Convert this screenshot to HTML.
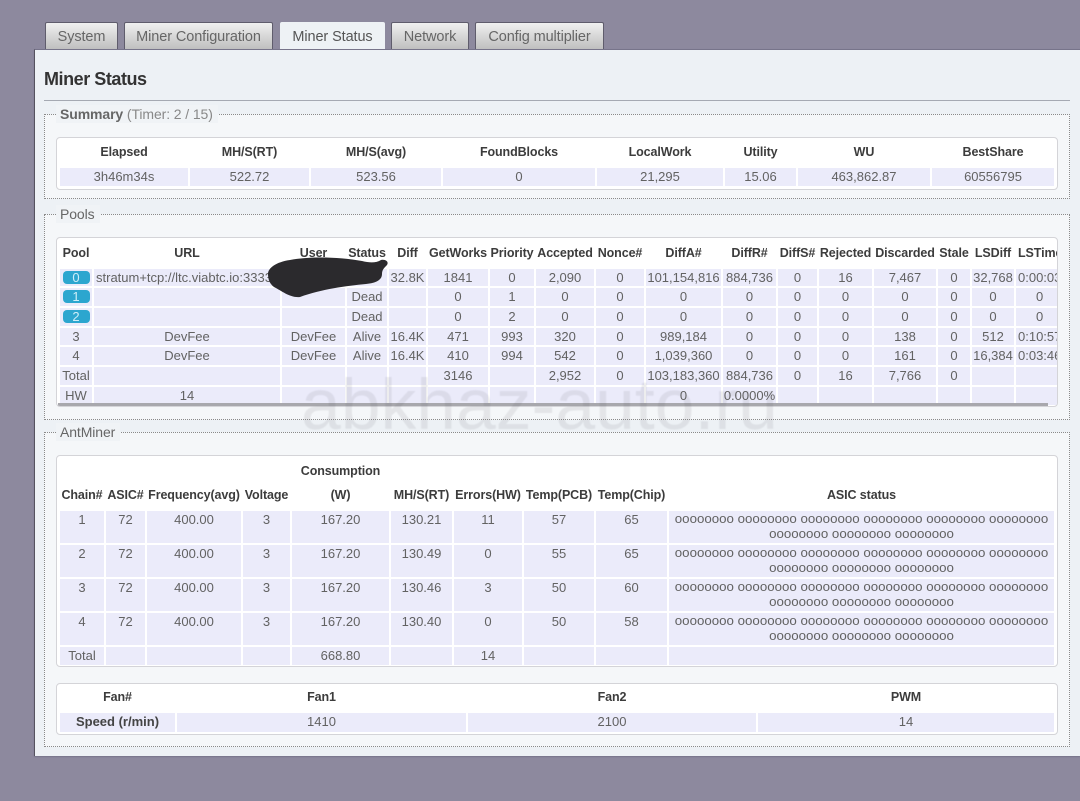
<!DOCTYPE html>
<html><head><meta charset="utf-8"><title>Miner Status</title>
<style>
html,body{margin:0;padding:0;width:1080px;height:801px;overflow:hidden;background:#8d899e;font-family:"Liberation Sans",sans-serif;color:#555}
.a{position:absolute}
.tab{position:absolute;top:22px;height:27px;box-sizing:border-box;border:1px solid #5f5c6c;border-bottom:0;border-radius:2px 2px 0 0;background:linear-gradient(#f0f0f0,#bfbfbf);text-align:center;font-size:14.5px;line-height:28px;color:#666;letter-spacing:-.1px}
.tab.on{background:#eef2f5;border-color:#eef2f5;height:28px;color:#555}
#panel{position:absolute;left:34px;top:49px;width:1046px;height:707px;background:#edf1f5;border-left:1px solid #55525f;border-top:1px solid #77748a;box-sizing:border-box;box-shadow:0 1px 1px #77748a}
.fs{position:absolute;left:44px;width:1026px;box-sizing:border-box;border:1px dotted #8a8a8a;background:#f5f7f9}
.lg{position:absolute;background:#f0f3f6;padding:0 5px 0 4px;left:56px;font-size:14px;line-height:18px;color:#666;font-weight:bold;letter-spacing:-.1px}
.lg span{font-weight:normal;color:#888}
.box{position:absolute;left:56px;width:1002px;box-sizing:border-box;background:#fff;border:1px solid #d4d4d8;border-radius:4px;overflow:hidden}
table{position:absolute;left:1px;top:0;table-layout:fixed;border-collapse:separate;border-spacing:2px 2px;font-size:13px}
td,th{padding:0;text-align:center;overflow:hidden;white-space:nowrap}
th{color:#3c3c3c;font-weight:bold;font-size:12.5px;letter-spacing:-.1px}
td{background:#ebebfa;color:#626262;vertical-align:top;line-height:17px}
.b{display:inline-block;width:27px;height:13px;line-height:13px;background:#2ca6cf;color:#cfeef8;border-radius:4px;margin-top:2px}
.st{font-size:13.3px;line-height:15px;white-space:normal;padding-top:0;letter-spacing:0}
.h{vertical-align:bottom;line-height:24px;padding-bottom:2px}
.t th{padding-bottom:4px}
</style></head><body>
<div class="tab" style="left:45px;width:73px">System</div>
<div class="tab" style="left:124px;width:149px">Miner Configuration</div>
<div class="tab on" style="left:280px;width:105px">Miner Status</div>
<div class="tab" style="left:391px;width:78px">Network</div>
<div class="tab" style="left:475px;width:129px">Config multiplier</div>
<div id="panel"></div>
<div class="a" style="left:44px;top:68px;font-size:18px;line-height:22px;color:#333;font-weight:bold;letter-spacing:-.45px">Miner Status</div>
<div class="a" style="left:44px;top:100px;width:1026px;height:1px;background:#a5a9b2"></div>

<div class="fs" style="top:114px;height:85px"></div>
<div class="lg" style="top:105px">Summary <span>(Timer: 2 / 15)</span></div>
<div class="box" style="top:137px;height:53px">
<table class="t" style="top:1px;left:1px;width:998px"><colgroup><col style="width:128px"><col style="width:119px"><col style="width:130px"><col style="width:152px"><col style="width:126px"><col style="width:71px"><col style="width:132px"><col style="width:122px"></colgroup>
<tr style="height:25px"><th>Elapsed</th><th>MH/S(RT)</th><th>MH/S(avg)</th><th>FoundBlocks</th><th>LocalWork</th><th>Utility</th><th>WU</th><th>BestShare</th></tr>
<tr style="height:18px"><td>3h46m34s</td><td>522.72</td><td>523.56</td><td>0</td><td>21,295</td><td>15.06</td><td>463,862.87</td><td>60556795</td></tr></table></div>

<div class="fs" style="top:214px;height:206px"></div>
<div class="lg" style="top:205px;font-weight:normal;color:#666">Pools</div>
<div class="box" style="top:237px;height:170px">
<table style="top:-1px;left:1px;width:1020px"><colgroup><col style="width:32px"><col style="width:186px"><col style="width:63px"><col style="width:40px"><col style="width:37px"><col style="width:60px"><col style="width:44px"><col style="width:58px"><col style="width:48px"><col style="width:75px"><col style="width:53px"><col style="width:39px"><col style="width:53px"><col style="width:62px"><col style="width:32px"><col style="width:42px"><col style="width:60px"></colgroup>
<tr style="height:28px"><th>Pool</th><th>URL</th><th>User</th><th>Status</th><th>Diff</th><th>GetWorks</th><th>Priority</th><th>Accepted</th><th>Nonce#</th><th>DiffA#</th><th>DiffR#</th><th>DiffS#</th><th>Rejected</th><th>Discarded</th><th>Stale</th><th>LSDiff</th><th style="text-align:left;padding-left:2px">LSTime</th></tr>
<tr style="height:17px"><td><span class="b">0</span></td><td style="text-align:left;padding-left:2px">stratum+tcp://ltc.viabtc.io:3333</td><td></td><td></td><td>32.8K</td><td>1841</td><td>0</td><td>2,090</td><td>0</td><td>101,154,816</td><td>884,736</td><td>0</td><td>16</td><td>7,467</td><td>0</td><td>32,768</td><td style="text-align:left;padding-left:2px">0:00:03:46</td></tr>
<tr style="height:18px"><td><span class="b">1</span></td><td></td><td></td><td>Dead</td><td></td><td>0</td><td>1</td><td>0</td><td>0</td><td>0</td><td>0</td><td>0</td><td>0</td><td>0</td><td>0</td><td>0</td><td style="text-align:left;padding-left:20px">0</td></tr>
<tr style="height:18px"><td><span class="b">2</span></td><td></td><td></td><td>Dead</td><td></td><td>0</td><td>2</td><td>0</td><td>0</td><td>0</td><td>0</td><td>0</td><td>0</td><td>0</td><td>0</td><td>0</td><td style="text-align:left;padding-left:20px">0</td></tr>
<tr style="height:17px"><td>3</td><td>DevFee</td><td>DevFee</td><td>Alive</td><td>16.4K</td><td>471</td><td>993</td><td>320</td><td>0</td><td>989,184</td><td>0</td><td>0</td><td>0</td><td>138</td><td>0</td><td>512</td><td style="text-align:left;padding-left:2px">0:10:57:12</td></tr>
<tr style="height:18px"><td>4</td><td>DevFee</td><td>DevFee</td><td>Alive</td><td>16.4K</td><td>410</td><td>994</td><td>542</td><td>0</td><td>1,039,360</td><td>0</td><td>0</td><td>0</td><td>161</td><td>0</td><td>16,384</td><td style="text-align:left;padding-left:2px">0:03:46:10</td></tr>
<tr style="height:18px"><td>Total</td><td></td><td></td><td></td><td></td><td>3146</td><td></td><td>2,952</td><td>0</td><td>103,183,360</td><td>884,736</td><td>0</td><td>16</td><td>7,766</td><td>0</td><td></td><td></td></tr>
<tr style="height:18px"><td>HW</td><td>14</td><td></td><td></td><td></td><td></td><td></td><td></td><td></td><td>0</td><td>0.0000%</td><td></td><td></td><td></td><td></td><td></td><td></td></tr>
</table>
<div class="a" style="left:1px;top:165px;width:990px;height:3px;background:#a8a8ad"></div></div>

<svg class="a" style="left:0;top:0" width="1080" height="801" viewBox="0 0 1080 801"><path d="M268 274C268 268 276 262 290 260C310 256 340 257 362 261C370 263 376 263 381 260C386 259 389 262 387 265C384 268 382 270 382 274C382 280 376 283 366 284C346 286 322 289 300 297C290 298 282 291 274 287C270 284 268 280 268 274Z" fill="#2b2a2d"/></svg>

<div class="fs" style="top:432px;height:315px"></div>
<div class="lg" style="top:423px;font-weight:normal;color:#666">AntMiner</div>
<div class="box" style="top:455px;height:212px">
<table style="top:-1px;left:1px;width:998px"><colgroup><col style="width:44px"><col style="width:39px"><col style="width:94px"><col style="width:47px"><col style="width:97px"><col style="width:61px"><col style="width:68px"><col style="width:70px"><col style="width:71px"><col style="width:385px"></colgroup>
<tr style="height:52px"><th class="h">Chain#</th><th class="h">ASIC#</th><th class="h">Frequency(avg)</th><th class="h">Voltage</th><th class="h">Consumption<br>(W)</th><th class="h">MH/S(RT)</th><th class="h">Errors(HW)</th><th class="h">Temp(PCB)</th><th class="h">Temp(Chip)</th><th class="h">ASIC status</th></tr>
<tr style="height:32px"><td>1</td><td>72</td><td>400.00</td><td>3</td><td>167.20</td><td>130.21</td><td>11</td><td>57</td><td>65</td><td class="st">oooooooo oooooooo oooooooo oooooooo oooooooo oooooooo oooooooo oooooooo oooooooo</td></tr>
<tr style="height:32px"><td>2</td><td>72</td><td>400.00</td><td>3</td><td>167.20</td><td>130.49</td><td>0</td><td>55</td><td>65</td><td class="st">oooooooo oooooooo oooooooo oooooooo oooooooo oooooooo oooooooo oooooooo oooooooo</td></tr>
<tr style="height:32px"><td>3</td><td>72</td><td>400.00</td><td>3</td><td>167.20</td><td>130.46</td><td>3</td><td>50</td><td>60</td><td class="st">oooooooo oooooooo oooooooo oooooooo oooooooo oooooooo oooooooo oooooooo oooooooo</td></tr>
<tr style="height:32px"><td>4</td><td>72</td><td>400.00</td><td>3</td><td>167.20</td><td>130.40</td><td>0</td><td>50</td><td>58</td><td class="st">oooooooo oooooooo oooooooo oooooooo oooooooo oooooooo oooooooo oooooooo oooooooo</td></tr>
<tr style="height:18px"><td>Total</td><td></td><td></td><td></td><td>668.80</td><td></td><td>14</td><td></td><td></td><td></td></tr>
</table></div>

<div class="box" style="top:683px;height:52px">
<table class="t" style="top:1px;left:1px;width:998px"><colgroup><col style="width:115px"><col style="width:289px"><col style="width:288px"><col style="width:296px"></colgroup>
<tr style="height:24px"><th>Fan#</th><th>Fan1</th><th>Fan2</th><th>PWM</th></tr>
<tr style="height:19px"><td style="font-weight:bold;color:#444">Speed (r/min)</td><td>1410</td><td>2100</td><td>14</td></tr></table></div>

<div class="a" style="left:301px;top:369px;font-size:71.5px;line-height:72px;color:rgba(90,90,100,.11);letter-spacing:0;white-space:nowrap;filter:blur(.6px)">abkhaz-auto.ru</div>
</body></html>
